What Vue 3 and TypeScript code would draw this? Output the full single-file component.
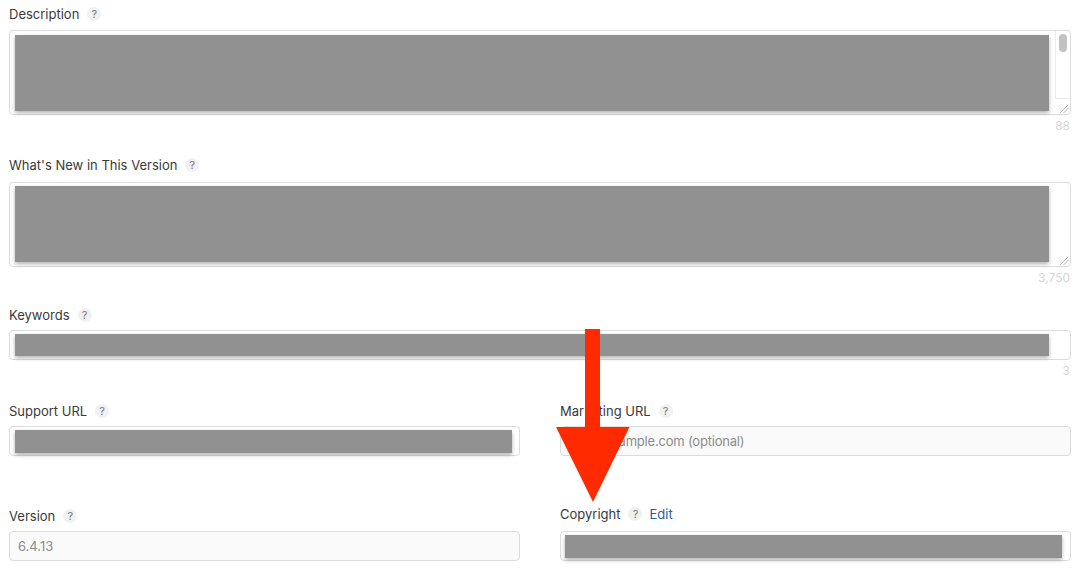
<template>
  <main class="form">
    <section class="field">
      <div class="label">Description <span class="help">?</span></div>
      <div class="box box--area">
        <div class="redacted redacted--area"></div>
        <div class="scrollbar"><span class="scrollbar__thumb"></span></div>
        <svg class="grip grip--boxed" viewBox="0 0 9 9" aria-hidden="true">
          <path d="M0.5 8.5 L8.5 0.5 M4 8.5 L8.5 4" />
        </svg>
      </div>
      <div class="count">88</div>
    </section>

    <section class="field field--whats-new">
      <div class="label">What's New in This Version <span class="help">?</span></div>
      <div class="box box--area">
        <div class="redacted redacted--area"></div>
        <svg class="grip" viewBox="0 0 9 9" aria-hidden="true">
          <path d="M0.5 8.5 L8.5 0.5 M4 8.5 L8.5 4" />
        </svg>
      </div>
      <div class="count">3,750</div>
    </section>

    <section class="field field--keywords">
      <div class="label">Keywords <span class="help">?</span></div>
      <div class="box box--line">
        <div class="redacted redacted--keywords"></div>
      </div>
      <div class="count">3</div>
    </section>

    <div class="columns columns--urls">
      <section class="field">
        <div class="label">Support URL <span class="help">?</span></div>
        <div class="box box--line">
          <div class="redacted redacted--url"></div>
        </div>
      </section>
      <section class="field">
        <div class="label">Marketing URL <span class="help">?</span></div>
        <div class="box box--line box--muted box--placeholder">http://example.com (optional)</div>
      </section>
    </div>

    <div class="columns columns--version">
      <section class="field">
        <div class="label">Version <span class="help">?</span></div>
        <div class="box box--line box--muted">6.4.13</div>
      </section>
      <section class="field">
        <div class="label label--raised">
          Copyright <span class="help">?</span> <a class="edit" href="#">Edit</a>
        </div>
        <div class="box box--line box--copyright">
          <div class="redacted redacted--copyright"></div>
        </div>
      </section>
    </div>

    <!-- Annotation arrow, lies over the form -->
    <svg class="arrow" viewBox="0 0 76 174" aria-hidden="true">
      <path d="M30 0 H45 V98 H74.5 L38 173 L1 98 H30 Z" />
    </svg>
  </main>
</template>

<script setup lang="ts"></script>

<style>
html,
body {
  margin: 0;
  background: #fff;
  overflow: hidden;
}
</style>

<style scoped>
.form {
  position: relative;
  box-sizing: border-box;
  width: 1081px;
  height: 572px;
  padding: 6px 10px 0 9px;
  font-family: Inter, "Liberation Sans", sans-serif;
  font-size: 13px;
  line-height: 16px;
  color: #3a3a3a;
  overflow: hidden;
}

.label {
  display: flex;
  align-items: center;
  gap: 8px;
  height: 16px;
  margin-bottom: 8px;
}

.label--raised {
  margin-top: -2px;
  margin-bottom: 9px;
}

.help {
  display: inline-flex;
  align-items: center;
  justify-content: center;
  width: 14px;
  height: 14px;
  border-radius: 50%;
  background: #f1f1f1;
  color: #777;
  font-size: 11px;
}

.edit {
  margin-left: -1px;
  color: #1f6296;
  text-decoration: none;
}

.box {
  position: relative;
  box-sizing: border-box;
  border: 1px solid #dcdcdc;
  border-radius: 4px;
  background: #fff;
}

.box--area {
  height: 85px;
  padding: 4px 0 0 5px;
}

.box--line {
  height: 30px;
  padding: 3px 0 0 5px;
}

.box--muted {
  padding: 6px 0 0 8px;
  background: #fafafa;
  color: #8c8c8c;
}

.box--placeholder {
  letter-spacing: -0.2px;
}

.box--copyright {
  padding-left: 4px;
}

.redacted {
  background: #919191;
  box-shadow: 0 2px 4px rgba(0, 0, 0, 0.3);
}

.redacted--area {
  width: 1034px;
  height: 76px;
}

.redacted--keywords {
  width: 1034px;
  height: 22px;
}

.redacted--url {
  width: 497px;
  height: 23px;
}

.redacted--copyright {
  width: 497px;
  height: 23px;
}

.scrollbar {
  position: absolute;
  top: 0;
  right: 0;
  bottom: 15px;
  width: 14px;
  border-left: 1px solid #ececec;
  border-bottom: 1px solid #ececec;
}

.scrollbar__thumb {
  display: block;
  width: 8px;
  height: 18px;
  margin: 3px 0 0 3px;
  border-radius: 4px;
  background: #c2c2c2;
}

.grip {
  position: absolute;
  right: 1px;
  bottom: 1px;
  width: 9px;
  height: 9px;
  fill: none;
  stroke: #555;
  stroke-width: 0.8;
  stroke-dasharray: 1 0.6;
}

.count {
  height: 16px;
  margin-top: 3px;
  padding-right: 1px;
  font-size: 12px;
  text-align: right;
  color: #d6d6d6;
}

.field--whats-new {
  margin-top: 23px;
}

.field--whats-new .label {
  margin-bottom: 9px;
}

.field--whats-new .box--area {
  padding-top: 3px;
}

.field--keywords {
  margin-top: 21px;
}

.field--keywords .label {
  margin-bottom: 7px;
}

.columns {
  display: grid;
  grid-template-columns: 511px 511px;
  column-gap: 40px;
}

.columns--urls {
  margin-top: 24px;
}

.columns--urls .label {
  margin-bottom: 7px;
}

.columns--version {
  margin-top: 52px;
}

.columns--version .label:not(.label--raised) {
  margin-bottom: 7px;
}

.arrow {
  position: absolute;
  left: 555px;
  top: 329px;
  width: 76px;
  height: 174px;
  fill: #ff2a00;
}
</style>
